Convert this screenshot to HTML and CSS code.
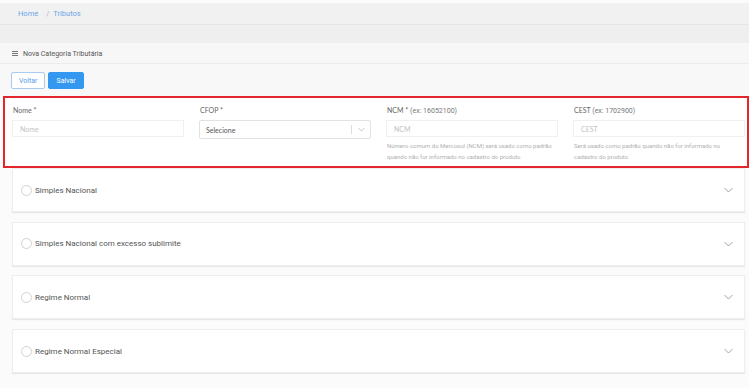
FILE: index.html
```html
<!DOCTYPE html>
<html lang="pt-BR">
<head>
    <meta charset="UTF-8">
    <meta name="viewport" content="width=device-width, initial-scale=1.0">
    <title>Nova Categoria Tributária</title>
    <link rel="stylesheet" href="styles.css">
</head>
<body>
    <div class="page">
        <div class="breadcrumb">
            <a href="#">Home</a>
            <span class="sep">/</span>
            <a href="#">Tributos</a>
        </div>
        <div class="subbar"></div>

        <div class="page-head">
            <span class="menu-icon"><i></i><i></i><i></i></span>
            Nova Categoria Tributária
        </div>

        <div class="toolbar">
            <button class="btn btn-outline">Voltar</button>
            <button class="btn btn-primary">Salvar</button>
        </div>

        <div class="form-box">
            <div class="form-group">
                <label>Nome *</label>
                <input type="text" class="field" placeholder="Nome">
            </div>
            <div class="form-group">
                <label>CFOP *</label>
                <div class="select">
                    <span>Selecione</span>
                    <span class="select-arrow">
                        <svg width="7" height="5" viewBox="0 0 7 5"><path d="M0.5 1 L3.5 4 L6.5 1" fill="none" stroke="#bbb" stroke-width="0.8"/></svg>
                    </span>
                </div>
            </div>
            <div class="form-group">
                <label>NCM * <span class="hint">(ex: 16052100)</span></label>
                <input type="text" class="field" placeholder="NCM">
                <p class="help">Número comum do Mercosul (NCM) será usado como padrão quando não for informado no cadastro do produto</p>
            </div>
            <div class="form-group">
                <label>CEST <span class="hint">(ex: 1702900)</span></label>
                <input type="text" class="field" placeholder="CEST">
                <p class="help">Será usado como padrão quando não for informado no cadastro do produto</p>
            </div>
        </div>

        <div class="regimes">
            <div class="regime">
                <span class="radio"></span>
                <span class="regime-name">Simples Nacional</span>
                <svg class="chevron" width="9" height="6" viewBox="0 0 9 6"><path d="M0.5 1 L4.5 5 L8.5 1" fill="none" stroke="#999" stroke-width="0.9"/></svg>
            </div>
            <div class="regime">
                <span class="radio"></span>
                <span class="regime-name">Simples Nacional com excesso sublimite</span>
                <svg class="chevron" width="9" height="6" viewBox="0 0 9 6"><path d="M0.5 1 L4.5 5 L8.5 1" fill="none" stroke="#999" stroke-width="0.9"/></svg>
            </div>
            <div class="regime">
                <span class="radio"></span>
                <span class="regime-name">Regime Normal</span>
                <svg class="chevron" width="9" height="6" viewBox="0 0 9 6"><path d="M0.5 1 L4.5 5 L8.5 1" fill="none" stroke="#999" stroke-width="0.9"/></svg>
            </div>
            <div class="regime">
                <span class="radio"></span>
                <span class="regime-name">Regime Normal Especial</span>
                <svg class="chevron" width="9" height="6" viewBox="0 0 9 6"><path d="M0.5 1 L4.5 5 L8.5 1" fill="none" stroke="#999" stroke-width="0.9"/></svg>
            </div>
        </div>
    </div>
</body>
</html>
```

FILE: styles.css
```css
body {
    margin: 0;
    background-color: #fff;
    font-family: Roboto, "Liberation Sans", Arial, sans-serif;
    color: #444;
}
.page {
    width: 749px;
    padding-top: 3px;
    background-color: #fbfbfb;
    min-height: 385px;
}
.breadcrumb {
    height: 21px;
    display: flex;
    align-items: center;
    padding-left: 18px;
    background-color: #f1f1f1;
    border-bottom: 1px solid #e6e6e6;
    font-size: 7.5px;
}
.breadcrumb a {
    color: #6aa6e8;
    text-decoration: none;
}
.breadcrumb .sep {
    color: #a6b4c4;
    margin: 0 4px 0 8px;
}
.subbar {
    height: 18px;
    background-color: #efefef;
}
.page-head {
    height: 21px;
    display: flex;
    align-items: center;
    gap: 5px;
    padding: 1px 0 0 12px;
    box-sizing: border-box;
    background-color: #f7f7f7;
    border-bottom: 1px solid #ececec;
    font-size: 7px;
    color: #555;
}
.menu-icon {
    display: flex;
    flex-direction: column;
    gap: 1px;
    width: 6px;
}
.menu-icon i {
    display: block;
    height: 1px;
    background-color: #777;
}
.toolbar {
    height: 24px;
    padding: 8px 0 0 11px;
    display: flex;
    gap: 3px;
    background-color: #f8f8f8;
}
.btn {
    height: 17px;
    padding: 0 7px;
    border-radius: 2px;
    font-family: Roboto, sans-serif;
    font-size: 7px;
    cursor: pointer;
}
.btn-outline {
    background-color: #fff;
    border: 1px solid #a9cbf0;
    color: #5b9be6;
}
.btn-primary {
    background-color: #3598f0;
    border: 1px solid #3598f0;
    color: #fff;
}
.form-box {
    box-sizing: border-box;
    margin-left: 3px;
    height: 72px;
    border: 2px solid #e3262b;
    padding: 7px 2px 0 7px;
    background-color: #fff;
    display: grid;
    grid-template-columns: repeat(4, 172px);
    gap: 15px;
}
.form-group label {
    display: block;
    height: 10px;
    line-height: 10px;
    margin: 0 0 5px 1px;
    font-family: Lato, sans-serif;
    font-size: 7px;
    color: #666;
}
.form-group .hint {
    font-family: Roboto, sans-serif;
    color: #777;
}
.field {
    display: block;
    box-sizing: border-box;
    width: 100%;
    height: 17px;
    margin: 0;
    padding: 0 7px;
    border: 1px solid #f0f0f0;
    font-family: Lato, sans-serif;
    font-size: 7px;
    color: #444;
    outline: none;
}
.field::placeholder {
    color: #c2c2c2;
}
.select {
    box-sizing: border-box;
    height: 19px;
    margin-top: 1px;
    display: flex;
    align-items: center;
    justify-content: space-between;
    padding-left: 6px;
    border: 1px solid #e2e2e2;
    border-radius: 2px;
    font-family: Lato, sans-serif;
    font-size: 7px;
    color: #555;
}
.select-arrow {
    display: flex;
    align-items: center;
    height: 9px;
    padding: 0 5px 0 6px;
    border-left: 1px solid #ddd;
}
.help {
    margin: 4px 0 0 1px;
    font-size: 6px;
    line-height: 10.5px;
    color: #b0b0b0;
}
.regimes {
    padding: 0 4px 0 12px;
    display: flex;
    flex-direction: column;
    gap: 9.7px;
}
.regime {
    box-sizing: border-box;
    height: 44px;
    display: flex;
    align-items: center;
    padding: 0 11px 0 8px;
    background-color: #fff;
    border: 1px solid #eee;
    box-shadow: 0 1px 1px rgba(0, 0, 0, 0.08);
}
.radio {
    box-sizing: border-box;
    width: 11px;
    height: 11px;
    border: 1px solid #d2d2d2;
    border-radius: 50%;
    margin-right: 3px;
}
.regime-name {
    flex: 1;
    font-size: 8px;
    color: #555;
}
.chevron {
    display: block;
}
```
